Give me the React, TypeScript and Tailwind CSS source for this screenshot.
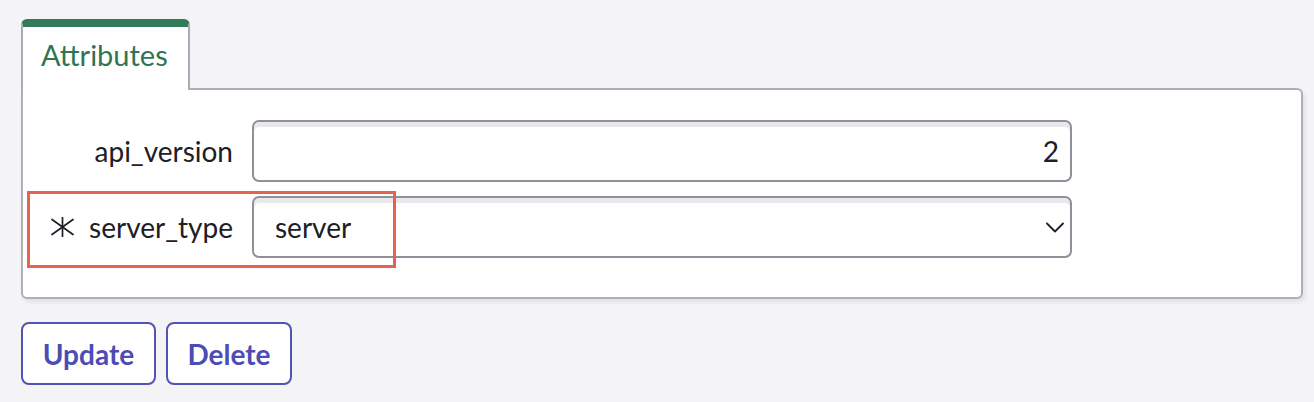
const fieldBox =
  'h-[62px] w-[820px] rounded-[7px] border-2 border-[#8e919a] bg-white shadow-[inset_0_5px_0_#e8e9ea] flex items-center text-[28px] text-[#1d2026]';

const Asterisk = () => (
  <svg width="23" height="20" viewBox="0 0 23 20" className="shrink-0">
    <g stroke="#1d2026" strokeWidth="1.7" strokeLinecap="round">
      <line x1="11.5" y1="0.5" x2="11.5" y2="19.5" />
      <line x1="1" y1="2.5" x2="22" y2="17.5" />
      <line x1="1" y1="17.5" x2="22" y2="2.5" />
    </g>
  </svg>
);

const Chevron = () => (
  <svg width="18" height="11" viewBox="0 0 18 11" className="shrink-0">
    <polyline points="1,1.5 9,9.5 17,1.5" fill="none" stroke="#1d2026" strokeWidth="1.8" strokeLinecap="round" strokeLinejoin="round" />
  </svg>
);

const App = () => {
  return (
    <div
      className="min-h-screen w-full bg-[#f4f4f6] pl-[21px] pt-[19px] pr-[11px]"
      style={{ fontFamily: 'Lato, "Noto Sans", sans-serif' }}
    >
      {/* Tab header */}
      <div className="flex">
        <div className="relative z-10 -mb-[2px] h-[71px] w-[169px] rounded-t-[6px] border-x-2 border-t-[8px] border-x-[#a9acb4] border-t-[#357a5a] bg-white pl-[18px] pt-[10px]">
          <span className="text-[29px] leading-[35px] text-[#2f7553]">Attributes</span>
        </div>
      </div>

      {/* Panel */}
      <div className="relative rounded-b-[6px] rounded-tr-[6px] border-2 border-[#aeb0b8] bg-white pb-[39px] pt-[30px] shadow-[2px_3px_4px_rgba(0,0,0,0.08)]">
        <div className="flex flex-col gap-[14px]">
          <div className="flex items-center">
            <div className="w-[229px] pr-[19px] text-right text-[28px] text-[#1d2026]">api_version</div>
            <div className={`${fieldBox} justify-end pr-[11px]`}>2</div>
          </div>
          <div className="flex items-center">
            <div className="flex w-[229px] items-center justify-end gap-[15px] pr-[19px] text-[28px] text-[#1d2026]">
              <Asterisk />
              <span>server_type</span>
            </div>
            <div className={`${fieldBox} justify-between pl-[21px] pr-[6px]`}>
              <span>server</span>
              <Chevron />
            </div>
          </div>
        </div>
        {/* highlight annotation */}
        <div className="pointer-events-none absolute left-[4px] top-[101px] h-[77px] w-[369px] border-[3px] border-[#e8634f]" />
      </div>

      {/* Actions */}
      <div className="mt-[23px] flex gap-[10px]">
        <button className="h-[63px] w-[135px] rounded-[8px] border-2 border-[#5353b6] bg-white text-[28px] font-bold text-[#4c4cb3]">
          Update
        </button>
        <button className="h-[63px] w-[126px] rounded-[8px] border-2 border-[#5353b6] bg-white text-[28px] font-bold text-[#4c4cb3]">
          Delete
        </button>
      </div>
    </div>
  );
};

export default App;
